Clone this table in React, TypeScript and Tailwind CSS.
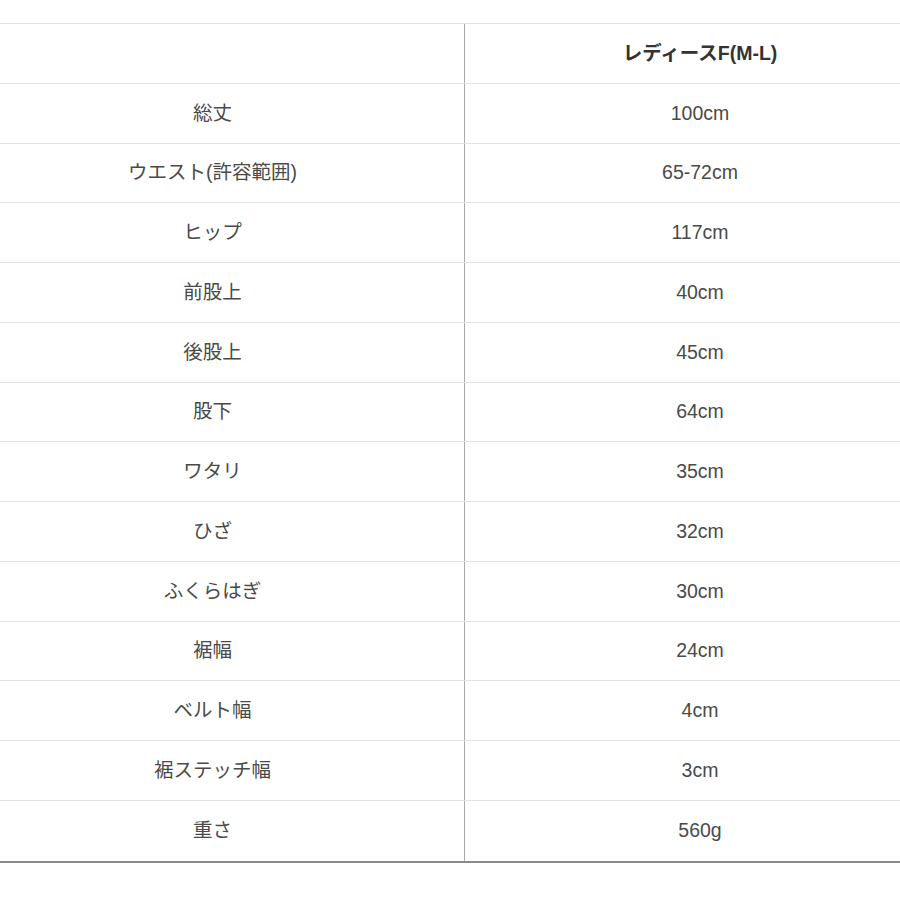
import React from "react";

const rows: [string, string][] = [
  ["総丈", "100cm"],
  ["ウエスト(許容範囲)", "65-72cm"],
  ["ヒップ", "117cm"],
  ["前股上", "40cm"],
  ["後股上", "45cm"],
  ["股下", "64cm"],
  ["ワタリ", "35cm"],
  ["ひざ", "32cm"],
  ["ふくらはぎ", "30cm"],
  ["裾幅", "24cm"],
  ["ベルト幅", "4cm"],
  ["裾ステッチ幅", "3cm"],
  ["重さ", "560g"],
];

export default function App() {
  return (
    <div
      className="w-[900px] h-[900px] overflow-hidden bg-white pt-[23px]"
      style={{ fontFamily: '"Liberation Sans", "Noto Sans CJK JP", sans-serif' }}
    >
      <div className="-ml-[39px] w-[974px] border-t border-[#e2e2e2] border-b-2 border-b-[#8a8a8a]">
        <div className="grid grid-cols-[504px_470px] h-[59.75px] border-b border-[#e2e2e2]">
          <div className="border-r border-[#a8a8a8]" />
          <div className="flex items-center justify-center text-[19.5px] font-bold text-[#333]">
            レディースF(M-L)
          </div>
        </div>
        {rows.map(([label, value], i) => (
          <div
            key={label}
            className={`grid grid-cols-[504px_470px] h-[59.75px] ${
              i < rows.length - 1 ? "border-b border-[#e2e2e2]" : ""
            }`}
          >
            <div className="flex items-center justify-center border-r border-[#a8a8a8] text-[19.5px] text-[#4a4a4a]">
              {label}
            </div>
            <div className="flex items-center justify-center text-[19.5px] text-[#4a4a4a]">
              {value}
            </div>
          </div>
        ))}
      </div>
    </div>
  );
}
